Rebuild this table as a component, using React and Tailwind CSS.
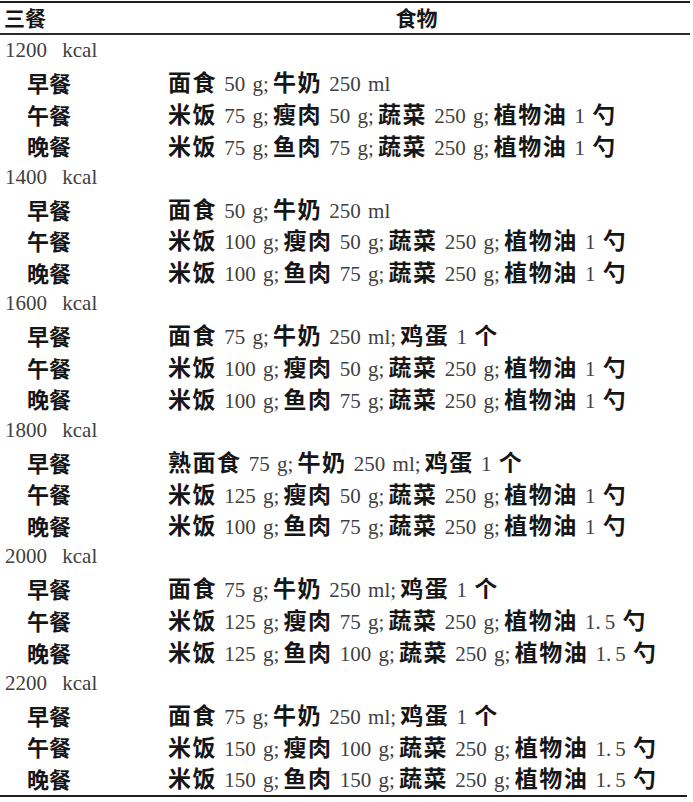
const PLANS = [
  { kcal: '1200 kcal', meals: [
    ['早餐', '面食 50 g;牛奶 250 ml'],
    ['午餐', '米饭 75 g;瘦肉 50 g;蔬菜 250 g;植物油 1 勺'],
    ['晚餐', '米饭 75 g;鱼肉 75 g;蔬菜 250 g;植物油 1 勺'],
  ] },
  { kcal: '1400 kcal', meals: [
    ['早餐', '面食 50 g;牛奶 250 ml'],
    ['午餐', '米饭 100 g;瘦肉 50 g;蔬菜 250 g;植物油 1 勺'],
    ['晚餐', '米饭 100 g;鱼肉 75 g;蔬菜 250 g;植物油 1 勺'],
  ] },
  { kcal: '1600 kcal', meals: [
    ['早餐', '面食 75 g;牛奶 250 ml;鸡蛋 1 个'],
    ['午餐', '米饭 100 g;瘦肉 50 g;蔬菜 250 g;植物油 1 勺'],
    ['晚餐', '米饭 100 g;鱼肉 75 g;蔬菜 250 g;植物油 1 勺'],
  ] },
  { kcal: '1800 kcal', meals: [
    ['早餐', '熟面食 75 g;牛奶 250 ml;鸡蛋 1 个'],
    ['午餐', '米饭 125 g;瘦肉 50 g;蔬菜 250 g;植物油 1 勺'],
    ['晚餐', '米饭 100 g;鱼肉 75 g;蔬菜 250 g;植物油 1 勺'],
  ] },
  { kcal: '2000 kcal', meals: [
    ['早餐', '面食 75 g;牛奶 250 ml;鸡蛋 1 个'],
    ['午餐', '米饭 125 g;瘦肉 75 g;蔬菜 250 g;植物油 1.5 勺'],
    ['晚餐', '米饭 125 g;鱼肉 100 g;蔬菜 250 g;植物油 1.5 勺'],
  ] },
  { kcal: '2200 kcal', meals: [
    ['早餐', '面食 75 g;牛奶 250 ml;鸡蛋 1 个'],
    ['午餐', '米饭 150 g;瘦肉 100 g;蔬菜 250 g;植物油 1.5 勺'],
    ['晚餐', '米饭 150 g;鱼肉 150 g;蔬菜 250 g;植物油 1.5 勺'],
  ] },
];

const CJK = "font-['Noto_Sans_CJK_SC',sans-serif] font-bold text-[#161616]";
const SERIF = "font-['Liberation_Serif',serif] text-[#404040]";

// split into chinese / latin runs so numbers get the serif face
function Mixed({ text }) {
  const parts = text.match(/[\u4e00-\u9fff]+|[^\u4e00-\u9fff]+/g) ?? [];
  return parts.map((p, i) =>
    /[\u4e00-\u9fff]/.test(p)
      ? <span key={i} className={`${CJK} text-[23px] tracking-[1.5px]`}>{p}</span>
      : <span key={i} className={`${SERIF} text-[21px] whitespace-pre [word-spacing:2px]`}>
          {p.replace(/;/g, ';\u2009').replace('.', '.\u2009')}
        </span>
  );
}

function Row({ children }) {
  return <div className="h-[31.65px] flex items-center whitespace-nowrap">{children}</div>;
}

export default function App() {
  return (
    <div className="w-[693px] h-[802px] bg-white overflow-hidden">
      <div className="mt-[1px] mr-[3px] border-t-2 border-[#1e1e1e]" />
      <div className="h-[30px] flex items-center">
        <span className={`${CJK} text-[21px] pl-[4px] w-[140px]`}>三餐</span>
        <span className={`${CJK} text-[21px] flex-1 text-center`}>食物</span>
      </div>
      <div className="mr-[3px] border-t-2 border-[#2a2a2a]" />
      {PLANS.map(p => (
        <div key={p.kcal}>
          <Row>
            <span className={`${SERIF} text-[21px] pl-[5px] [word-spacing:10px]`}>{p.kcal}</span>
          </Row>
          {p.meals.map(([meal, food]) => (
            <Row key={meal}>
              <span className={`${CJK} text-[22px] pl-[27px] w-[168px]`}>{meal}</span>
              <span><Mixed text={food} /></span>
            </Row>
          ))}
        </div>
      ))}
      <div className="mt-[1px] mr-[6px] border-t-2 border-[#1e1e1e]" />
    </div>
  );
}
